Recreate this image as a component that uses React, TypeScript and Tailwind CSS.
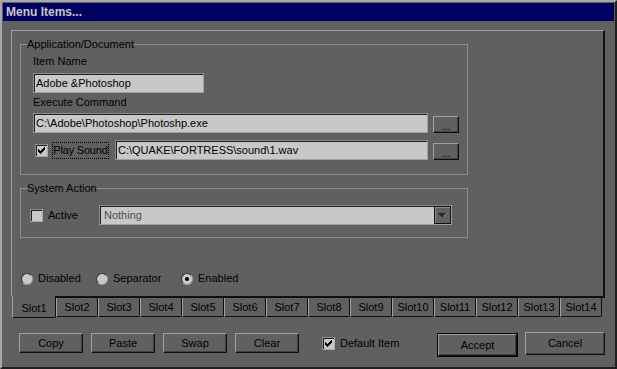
import type { ReactNode } from "react";

function Btn({ children, className = "" }: { children: ReactNode; className?: string }) {
    return (
        <div
            className={`flex items-center justify-center bg-[#606060] border border-t-[#a0a0a0] border-l-[#a0a0a0] border-r-[#101010] border-b-[#101010] shadow-[inset_-1px_-1px_0_#404040] ${className}`}
        >
            {children}
        </div>
    );
}

function Check({ checked }: { checked?: boolean }) {
    return (
        <div className="w-[13px] h-[13px] shrink-0 flex items-center justify-center bg-[#c8c8c8] border border-t-[#8c8c8c] border-l-[#8c8c8c] border-r-[#a8a8a8] border-b-[#a8a8a8] shadow-[inset_1px_1px_0_#202020]">
            {checked && (
                <svg width="9" height="9" viewBox="0 0 9 9" shapeRendering="crispEdges">
                    <path d="M1 3v3h1v1h1v1h1v-1h1v-1h1v-1h1v-1h1v-3h-1v1h-1v1h-1v1h-1v1h-1v-1h-1v-1z" fill="#000" />
                </svg>
            )}
        </div>
    );
}

function Radio({ on }: { on?: boolean }) {
    return (
        <div className="w-[12px] h-[12px] shrink-0 rounded-full flex items-center justify-center bg-[#c8c8c8] border border-t-[#303030] border-l-[#303030] border-r-[#a0a0a0] border-b-[#a0a0a0]">
            {on && <div className="w-[4px] h-[4px] rounded-full bg-black" />}
        </div>
    );
}

function Field({ value, className = "", dim }: { value: string; className?: string; dim?: boolean }) {
    return (
        <div
            className={`h-[20px] flex items-center pl-[2px] bg-[#c8c8c8] border border-t-[#8c8c8c] border-l-[#8c8c8c] border-r-[#a0a0a0] border-b-[#a0a0a0] shadow-[inset_1px_1px_0_#202020] whitespace-nowrap ${dim ? "text-[#505050]" : "text-black"} ${className}`}
        >
            {value}
        </div>
    );
}

const slots = Array.from({ length: 13 }, (_, i) => `Slot${i + 2}`);

export default function App() {
    return (
        <div className="w-[617px] h-[369px] overflow-hidden bg-[#606060] font-['Liberation_Sans',Arial,sans-serif] text-[11px] text-black">
            <div className="w-[617px] h-[369px] p-px border-2 border-t-[#a8a8a8] border-l-[#a8a8a8] border-r-[#202020] border-b-[#202020] flex flex-col">
                {/* title bar */}
                <div className="h-[18px] shrink-0 flex items-center pl-[3px] bg-[#000060] text-[#c8c8c8] font-bold text-[12px]">
                    Menu Items...
                </div>

                <div className="pl-[8px] pt-[9px]">
                    {/* tab page */}
                    <div className="w-[594px] h-[268px] border-t border-l border-r-2 border-b-2 border-t-[#a0a0a0] border-l-[#a0a0a0] border-r-[#101010] border-b-[#101010]">
                        <fieldset className="ml-[8px] mt-[7px] w-[448px] border border-[#8c8c8c]">
                            <legend className="ml-[6px] leading-[12px]">Application/Document</legend>
                            <div className="pl-[12px] pb-[14px]">
                                <div className="mt-[5px] leading-[13px]">Item Name</div>
                                <Field value="Adobe &Photoshop" className="mt-[5px] w-[171px]" />
                                <div className="mt-[3px] leading-[13px]">Execute Command</div>
                                <div className="mt-[4px] flex items-end">
                                    <Field value="C:\Adobe\Photoshop\Photoshp.exe" className="w-[395px]" />
                                    <Btn className="ml-[5px] w-[26px] h-[17px] leading-none pt-[3px]">...</Btn>
                                </div>
                                <div className="mt-[7px] flex items-center">
                                    <div className="ml-[2px]">
                                        <Check checked />
                                    </div>
                                    <div className="ml-[4px] w-[57px] h-[17px] flex items-center justify-center whitespace-nowrap tracking-[-0.2px] border border-dotted border-black">
                                        Play Sound
                                    </div>
                                    <div className="ml-[6px] flex items-end">
                                        <Field value="C:\QUAKE\FORTRESS\sound\1.wav" className="w-[313px]" />
                                        <Btn className="ml-[5px] w-[26px] h-[17px] leading-none pt-[3px]">...</Btn>
                                    </div>
                                </div>
                            </div>
                        </fieldset>

                        <fieldset className="ml-[8px] mt-[7px] w-[448px] border border-[#8c8c8c]">
                            <legend className="ml-[6px] leading-[12px]">System Action</legend>
                            <div className="pl-[9px] pb-[12px] mt-[11px] flex items-center">
                                <Check />
                                <div className="ml-[5px] w-[51px]">Active</div>
                                <div className="w-[353px] h-[20px] flex border border-t-[#8c8c8c] border-l-[#8c8c8c] border-r-[#a0a0a0] border-b-[#a0a0a0]">
                                    <div className="flex-1 flex items-center pl-[3px] bg-[#c8c8c8] text-[#505050] border-t border-l border-[#202020]">
                                        Nothing
                                    </div>
                                    <div className="w-[17px] flex items-center justify-center bg-[#606060] border border-[#101010] shadow-[inset_1px_1px_0_#8c8c8c]">
                                        <svg width="9" height="5" viewBox="0 0 9 5" shapeRendering="crispEdges">
                                            <path d="M0 0h8v1h-1v1h-1v1h-1v1h-2v-1h-1v-1h-1v-1h-1z" fill="#2a2a2a" />
                                            <path d="M6 2h1v-1h1v-1h1v1h-1v1h-1v1h-1z" fill="#9a9a9a" />
                                        </svg>
                                    </div>
                                </div>
                            </div>
                        </fieldset>

                        <div className="mt-[34px] ml-[9px] h-[13px] flex items-center">
                            <div className="w-[75px] flex items-center">
                                <Radio />
                                <span className="ml-[5px]">Disabled</span>
                            </div>
                            <div className="w-[85px] flex items-center">
                                <Radio />
                                <span className="ml-[5px]">Separator</span>
                            </div>
                            <div className="flex items-center">
                                <Radio on />
                                <span className="ml-[5px]">Enabled</span>
                            </div>
                        </div>
                    </div>

                    {/* tabs */}
                    <div className="flex items-start">
                        <div className="ml-[1px] -mt-[2px] w-[44px] h-[22px] pt-[4px] flex items-center justify-center bg-[#606060] border-l border-r border-b border-l-[#a0a0a0] border-r-[#101010] border-b-[#101010] rounded-br-[2px]">
                            Slot1
                        </div>
                        {slots.map((s) => (
                            <div
                                key={s}
                                className="w-[42px] h-[19px] flex items-center justify-center border-l border-r border-b border-l-[#a0a0a0] border-r-[#101010] border-b-[#101010] rounded-br-[2px]"
                            >
                                {s}
                            </div>
                        ))}
                    </div>

                    {/* buttons */}
                    <div className="mt-[15px] ml-[8px] mr-[9px] flex items-start">
                        <Btn className="w-[64px] h-[20px]">Copy</Btn>
                        <Btn className="ml-[8px] w-[64px] h-[20px]">Paste</Btn>
                        <Btn className="ml-[8px] w-[64px] h-[20px]">Swap</Btn>
                        <Btn className="ml-[8px] w-[64px] h-[20px]">Clear</Btn>
                        <div className="ml-[23px] h-[20px] flex items-center">
                            <Check checked />
                            <span className="ml-[5px]">Default Item</span>
                        </div>
                        <div className="ml-auto w-[81px] h-[24px] border border-black">
                            <Btn className="w-full h-full">Accept</Btn>
                        </div>
                        <Btn className="ml-[7px] -mt-[1px] w-[80px] h-[23px]">Cancel</Btn>
                    </div>
                </div>
            </div>
        </div>
    );
}
